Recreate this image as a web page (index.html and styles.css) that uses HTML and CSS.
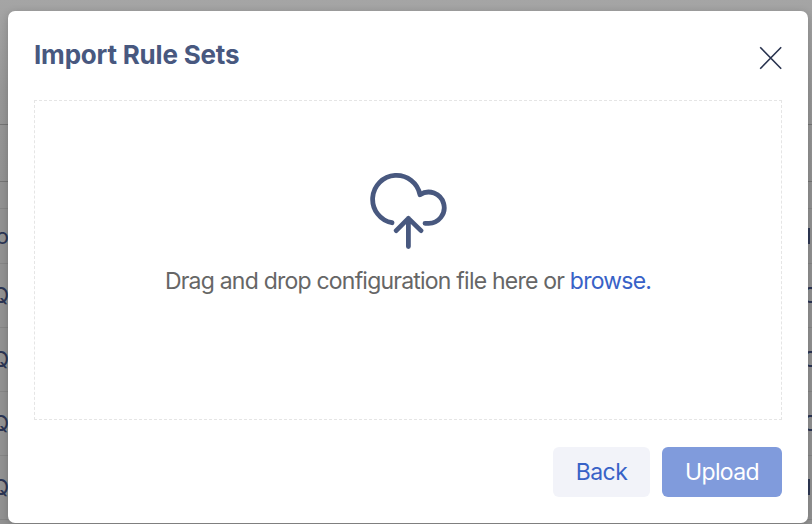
FILE: index.html
```
<!DOCTYPE html>
<html lang="en">
<head>
<meta charset="utf-8">
<title>Import Rule Sets</title>
<link rel="stylesheet" href="styles.css">
</head>
<body>
<div class="page">
  <div class="row row-top"></div>
  <div class="row row-tools"></div>
  <div class="row row-gap"></div>
  <div class="row row-head"><span class="start">o</span><span class="end"><i class="stem"></i></span></div>
  <div class="row"><span class="start">Q</span><span class="end">C</span></div>
  <div class="row"><span class="start">Q</span><span class="end">C</span></div>
  <div class="row"><span class="start">Q</span><span class="end">C</span></div>
  <div class="row"><span class="start">Q</span><span class="end"><i class="stem"></i></span></div>
</div>
<div class="overlay">
  <section class="modal" role="dialog">
    <header class="modal-header">
      <h1>Import Rule Sets</h1>
      <button class="close" aria-label="Close"><svg width="24" height="24" viewBox="0 0 24 24"><path d="M2.2 1.2 23.2 22.8M23.2 1.2 2.2 22.8"/></svg></button>
    </header>
    <div class="dropzone">
      <svg class="cloud" width="80" height="80" viewBox="0 0 80 80"><path d="M24 52.7A23.9 23.9 0 1 1 52 24.7A15.6 15.6 0 1 1 60 53.3H57M40.4 76.5V48.5M28.2 60.6 40.4 48.4 53 60.6"/></svg>
      <p>Drag and drop configuration file here or <a>browse.</a></p>
    </div>
    <footer class="actions">
      <button class="btn back">Back</button>
      <button class="btn upload">Upload</button>
    </footer>
  </section>
</div>
</body>
</html>
```
FILE: styles.css
```
* { box-sizing: border-box; }
body { margin: 0; width: 812px; height: 524px; overflow: hidden; font-family: Inter, sans-serif; background: #929292; }
.page { width: 812px; height: 524px; overflow: hidden; background: linear-gradient(#a5a5a5 0, #979797 90px, #929292 190px); }
.row { height: 64px; padding-bottom: 2px; border-bottom: 1px solid #868686; display: flex; justify-content: space-between; align-items: center; color: #2b3554; font-size: 22px; line-height: 28px; overflow: hidden; }
.row-top { height: 125px; border-color: #757575; }
.row-tools { height: 57px; border-color: #757575; }
.row-gap { height: 27px; }
.row-head { height: 55px; padding-bottom: 0; }
.start { width: 9px; display: flex; justify-content: flex-end; }
.end { width: 4px; display: flex; overflow: hidden; }
.row:not(.row-head) .end { text-indent: -6px; }
.stem { width: 2px; height: 16px; background: #2f3955; }
.overlay { position: absolute; inset: 0; padding: 11px 4px 1px 8px; display: flex; }
.modal { width: 800px; height: 512px; padding: 26px; background: #fff; border-radius: 7px; box-shadow: 0 2px 9px rgba(0,0,0,.2); }
.modal-header { height: 63px; display: flex; justify-content: space-between; }
h1 { margin: 0; font-size: 26px; line-height: 36px; font-weight: 700; color: #48587f; letter-spacing: -.2px; }
.close { width: 24px; height: 24px; margin-top: 9px; padding: 0; border: 0; background: none; }
.close svg { display: block; fill: none; stroke: #29334f; stroke-width: 1.6; }
.dropzone { height: 320px; padding-top: 69px; border: 1px dashed #e5e5e5; display: flex; flex-direction: column; align-items: center; }
.cloud { flex: none; fill: none; stroke: #48587f; stroke-width: 4.8; stroke-linecap: round; stroke-linejoin: round; }
.dropzone p { margin: 15px 0 0; font-size: 23px; line-height: 32px; color: #666; white-space: nowrap; letter-spacing: -.78px; }
.dropzone a { color: #3862c7; }
.actions { margin-top: 27px; display: flex; justify-content: flex-end; gap: 12px; }
.btn { height: 50px; padding: 0; border: 0; border-radius: 6px; font: 23px/50px Inter, sans-serif; letter-spacing: -.6px; }
.back { width: 97px; background: #f2f3f9; color: #3862c7; }
.upload { width: 120px; background: #809bdc; color: #fff; }
```
